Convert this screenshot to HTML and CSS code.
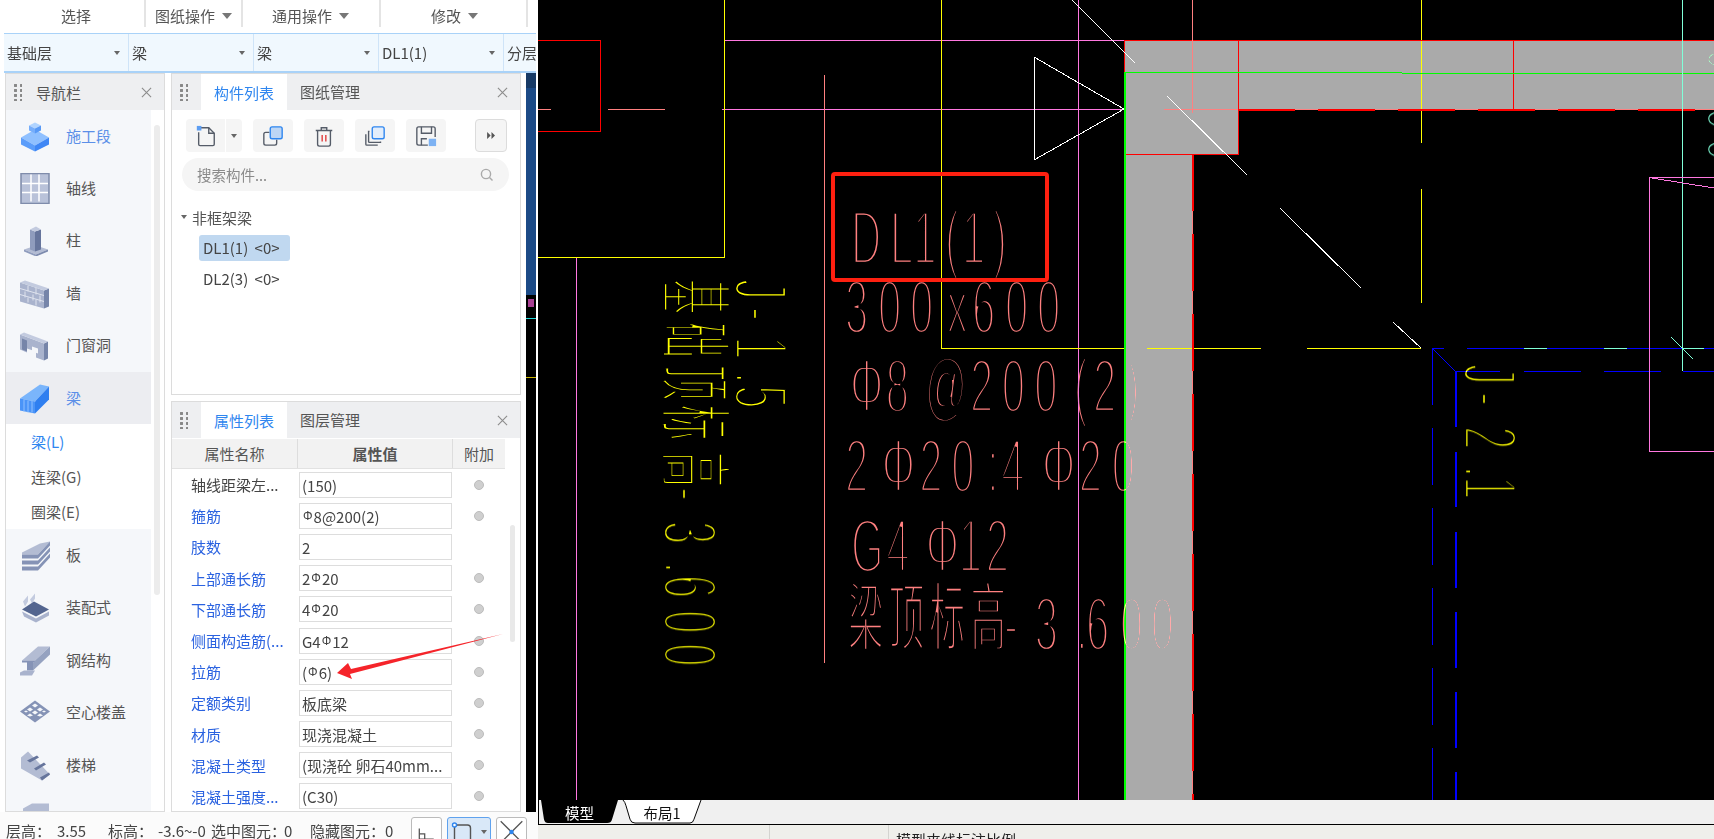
FILE: index.html
```html
<!DOCTYPE html>
<html lang="zh">
<head>
<meta charset="utf-8">
<title>梁 DL1(1)</title>
<link rel="stylesheet" href="styles.css">
</head>
<body>
<div class="app">
  <div class="left">
    <div class="ribbon">
      <div class="rb rb-1"><span class="rb-sel">选择</span></div>
      <div class="rb rb-2">图纸操作<i class="caret"></i></div>
      <div class="rb rb-3">通用操作<i class="caret"></i></div>
      <div class="rb rb-4">修改<i class="caret"></i></div>
    </div>
    <div class="selects">
      <div class="sel">基础层<i class="caret small"></i></div>
      <div class="sel">梁<i class="caret small"></i></div>
      <div class="sel">梁<i class="caret small"></i></div>
      <div class="sel">DL1(1)<i class="caret small"></i></div>
      <div class="sel last">分层</div>
    </div>
    <div class="body">
      <section class="panel nav">
        <header class="phead"><i class="grip"></i><span class="nav-title">导航栏</span>
          <svg class="close" viewBox="0 0 12 12"><path d="M1 1l10 10M11 1L1 11"/></svg></header>
        <div class="nav-wrap">
          <div class="nav-list">
            <div class="item on-text">
              <svg class="ico" viewBox="0 0 30 30"><path fill="#8fc0ff" d="M15 8l14 8-14 8-14-8z"/><path fill="#5b9dfa" d="M1 16l14 8v6L1 23z"/><path fill="#3f87f5" d="M15 24l14-8v7l-14 7z"/><path fill="#b0d4ff" d="M15 1l6 3-6 3-6-3z"/><path fill="#76aefb" d="M9 4l6 3v5l-6-3z"/><path fill="#5799f6" d="M15 7l6-3v5l-6 3z"/></svg>
              <span>施工段</span></div>
            <div class="item">
              <svg class="ico" viewBox="0 0 30 30"><rect x="1" y="0" width="28" height="30" fill="#b9c2d9" stroke="#7f8cab" stroke-width="1.5"/><path stroke="#fff" stroke-width="1.5" d="M11 1v27M19 1v27M2 10h26M2 19h26"/></svg>
              <span>轴线</span></div>
            <div class="item">
              <svg class="ico" viewBox="0 0 30 30"><path fill="#b3bcd3" d="M4 24l12-4 12 4-12 5z"/><path fill="#8f9cbd" d="M4 24l12 5v2L4 26z"/><path fill="#7d8bae" d="M16 29l12-5v2l-12 5z"/><path fill="#8f9cbd" d="M10 4l5 2v20l-5-2z"/><path fill="#66759c" d="M15 6l6-2v20l-6 2z"/><path fill="#c3cbdf" d="M10 4l6-3 5 3-6 2z"/></svg>
              <span>柱</span></div>
            <div class="item">
              <svg class="ico" viewBox="0 0 30 30"><path fill="#a9b3cd" d="M0 4l24 8v18L0 23z"/><path fill="#7685a9" d="M24 12l5-2v18l-5 2z"/><path fill="#c3cbdf" d="M0 4l5-2 24 8-5 2z"/><path stroke="#dfe3ee" fill="none" d="M0 10l24 7M0 16l24 7M8 7v6M16 9v7M5 13v6M13 16v6M20 17v7M8 19v5M16 21v6"/></svg>
              <span>墙</span></div>
            <div class="item">
              <svg class="ico" viewBox="0 0 30 30"><path fill="#a9b3cd" d="M0 4l24 9v17l-8-3v-6l-9-3v4l-7-3z"/><path fill="#7685a9" d="M24 13l4-2v17l-4 2zM2 8l5 2v11l-5-2z"/><path fill="#c3cbdf" d="M0 4l4-2 24 9-4 2z"/><path fill="#f5f7fa" d="M12 16l6 2v5l-6-2z"/></svg>
              <span>门窗洞</span></div>
            <div class="item active">
              <svg class="ico" viewBox="0 0 30 30"><path fill="#7ab5fb" d="M0 15L20 1l9 2-14 15z"/><path fill="#4a94f8" d="M0 15l15 3v12L0 27z"/><path fill="#2f7ff0" d="M15 18L29 3v13L15 30z"/><path stroke="#8fc0ff" d="M4 16v12M8 17v12M12 17v12"/></svg>
              <span>梁</span></div>
            <div class="sub">
              <div class="sub-item cur">梁(L)</div>
              <div class="sub-item">连梁(G)</div>
              <div class="sub-item">圈梁(E)</div>
            </div>
            <div class="item">
              <svg class="ico" viewBox="0 0 30 30"><path fill="#b3bcd3" d="M2 12L20 3l10-2-12 13H2z"/><path fill="#8593b6" d="M2 14h16v4H2zM2 20h16v4H2zM2 26h16v4H2z"/><path fill="#8593b6" d="M18 14L30 1v4L18 18zM18 20L30 7v4L18 24zM18 26l12-13v4L18 30z"/></svg>
              <span>板</span></div>
            <div class="item">
              <svg class="ico" viewBox="0 0 30 30"><path fill="#c3cbdf" d="M3 9l5-6v6l-3 5zM10 7l5-6v5l-3 5z"/><path fill="#53658f" d="M2 17L14 9l15 8-13 7z"/><path fill="#a9b3cd" d="M2 19l14 7 13-7v4l-13 7-12-6z"/></svg>
              <span>装配式</span></div>
            <div class="item">
              <svg class="ico" viewBox="0 0 30 30"><path fill="#b3bcd3" d="M2 15L18 1h12L15 15z"/><path fill="#8593b6" d="M2 15h13v2H2zM7 17h6v8H7z"/><path fill="#95a2c0" d="M15 15L30 1v4L15 19zM13 17l17-12v4L13 25z"/><path fill="#a9b3cd" d="M0 27l4-2h11l-3 5H0z"/></svg>
              <span>钢结构</span></div>
            <div class="item">
              <svg class="ico" viewBox="0 0 30 30"><path fill="#8593b6" d="M15 3l15 11-15 11L0 14z"/><path fill="#f5f7fa" d="M15 6l3 2-3 2-3-2zM10 10l3 2-3 2-3-2zM20 10l3 2-3 2-3-2zM15 13l3 2-3 2-3-2zM6 13l2 1-2 1-2-1zM24 13l2 1-2 1-2-1zM10 16l3 2-3 1-3-1zM20 16l3 2-3 1-3-1z"/></svg>
              <span>空心楼盖</span></div>
            <div class="item">
              <svg class="ico" viewBox="0 0 30 30"><path fill="#b3bcd3" d="M1 7L8 1l22 23-8 6L1 18z"/><path fill="#66759c" d="M7 10l10-5 2 2-9 5zM14 18l10-6 2 2-10 6zM20 27l9-5 1 2-8 6z"/></svg>
              <span>楼梯</span></div>
            <div class="item">
              <svg class="ico" viewBox="0 0 30 30"><path fill="#b3bcd3" d="M3 6l9-5h17v20H3z"/></svg>
              <span>&nbsp;</span></div>
          </div>
          <div class="nav-track"></div>
        </div>
      </section>

      <div class="mid">
        <section class="panel comp">
          <header class="phead"><i class="grip"></i>
            <span class="tab cur">构件列表</span><span class="tab">图纸管理</span>
            <svg class="close" viewBox="0 0 12 12"><path d="M1 1l10 10M11 1L1 11"/></svg></header>
          <div class="tools">
            <div class="tb split">
              <svg class="ti" viewBox="0 0 24 24"><path d="M5 3h10l6 6v12a1.500 1.500 0 0 1-1.500 1.500h-14A1.500 1.500 0 0 1 4 21V8"/><path d="M15 3v6h6"/><rect x="2" y="1" width="5" height="5" fill="#5c9df2" stroke="none"/></svg>
              <span class="tb-arrow"><i class="caret small"></i></span>
            </div>
            <div class="tb">
              <svg class="ti" viewBox="0 0 24 24"><rect x="9" y="2" width="13" height="13" rx="2" fill="#bdd6f5" stroke="#2f86ef"/><path d="M8 8H4a2 2 0 0 0-2 2v10a2 2 0 0 0 2 2h10a2 2 0 0 0 2-2v-4"/></svg></div>
            <div class="tb">
              <svg class="ti" viewBox="0 0 24 24"><path d="M3 6h18M9 6V3h6v3M5 6v15a2 2 0 0 0 2 2h10a2 2 0 0 0 2-2V6"/><path stroke="#e03a3a" d="M10 11v7M14 11v7"/></svg></div>
            <div class="tb">
              <svg class="ti" viewBox="0 0 24 24"><rect x="9" y="2" width="13" height="13" rx="2" fill="#e2edfb" stroke="#2f86ef"/><path d="M6 7H5v11a1 1 0 0 0 1 1h12v-1M2 10v11a1 1 0 0 0 1 1h12"/></svg></div>
            <div class="tb">
              <svg class="ti" viewBox="0 0 24 24"><path d="M14 22H4a2 2 0 0 1-2-2V4a2 2 0 0 1 2-2h16a2 2 0 0 1 2 2v9"/><path d="M7 2v7h11V2M7 22v-7h6"/><rect x="15" y="15" width="8" height="8" fill="#7db2f3" stroke="none"/></svg></div>
            <div class="tb more">
              <svg class="ti-more" viewBox="0 0 10 8"><path fill="#555" d="M0 0l4 4-4 4zM5 0l4 4-4 4z"/></svg></div>
          </div>
          <div class="search"><span>搜索构件...</span>
            <svg class="sicon" viewBox="0 0 14 14"><circle cx="6" cy="6" r="4.600"/><path d="M9.500 9.500L12.500 12.500"/></svg></div>
          <div class="tree">
            <div class="tree-head"><i class="caret small"></i>非框架梁</div>
            <div class="leaf cur">DL1(1) &lt;0&gt;</div>
            <div class="leaf">DL2(3) &lt;0&gt;</div>
          </div>
        </section>

        <section class="panel props">
          <header class="phead"><i class="grip"></i>
            <span class="tab cur">属性列表</span><span class="tab">图层管理</span>
            <svg class="close" viewBox="0 0 12 12"><path d="M1 1l10 10M11 1L1 11"/></svg></header>
          <div class="thead"><div class="th th-n">属性名称</div><div class="th th-v">属性值</div><div class="th th-a">附加</div></div>
          <div class="rows">
            <div class="row"><span class="pn">轴线距梁左...</span><span class="pv">(150)</span><i class="dot"></i></div>
            <div class="row"><span class="pn link">箍筋</span><span class="pv"><b class="bar">Φ</b>8@200(2)</span><i class="dot"></i></div>
            <div class="row"><span class="pn link">肢数</span><span class="pv">2</span></div>
            <div class="row"><span class="pn link">上部通长筋</span><span class="pv">2<b class="bar">Φ</b>20</span><i class="dot"></i></div>
            <div class="row"><span class="pn link">下部通长筋</span><span class="pv">4<b class="bar">Φ</b>20</span><i class="dot"></i></div>
            <div class="row"><span class="pn link">侧面构造筋(...</span><span class="pv">G4<b class="bar">Φ</b>12</span><i class="dot"></i></div>
            <div class="row"><span class="pn link">拉筋</span><span class="pv">(<b class="bar">Φ</b>6)</span><i class="dot"></i></div>
            <div class="row"><span class="pn link">定额类别</span><span class="pv">板底梁</span><i class="dot"></i></div>
            <div class="row"><span class="pn link">材质</span><span class="pv">现浇混凝土</span><i class="dot"></i></div>
            <div class="row"><span class="pn link">混凝土类型</span><span class="pv">(现浇砼 卵石40mm...</span><i class="dot"></i></div>
            <div class="row"><span class="pn link">混凝土强度...</span><span class="pv">(C30)</span><i class="dot"></i></div>
            <div class="props-track"></div>
          </div>
        </section>
      </div>
      <div class="strip"><div class="strip-blue"></div><div class="strip-mark m1"></div><div class="strip-mark m2"></div><div class="strip-mark m3"></div></div>
    </div>
    <div class="status">
      <span class="st w51">层高：</span><span class="st w51">3.55</span><span class="st w50">标高：</span><span class="st w53">-3.6~-0</span><span class="st w73">选中图元：</span><span class="st w26">0</span><span class="st w75">隐藏图元：</span><span class="st w26">0</span>
      <div class="sb sb-first">
        <svg viewBox="0 0 30 24"><path d="M7 8v12h16M7 14h6v6" /></svg>
      </div>
      <div class="sb sb-on">
        <svg viewBox="0 0 26 24"><rect x="5" y="5" width="16" height="18" rx="3"/><circle cx="5" cy="5" r="2" fill="#fff" stroke="#2f86ef"/></svg><i class="caret small"></i>
      </div>
      <div class="sb">
        <svg viewBox="0 0 30 24"><path d="M3 0l24 24M27 0L3 24"/><circle cx="15" cy="12" r="2.500" fill="#2f86ef" stroke="none"/></svg>
      </div>
    </div>
    <svg class="annot" viewBox="0 0 538 839"><path fill="#f5242a" d="M503 634L351 669l-3-6-11 10 15 6-2-5z"/></svg>
  </div>

  <div class="cad">
    <svg class="draw" viewBox="538 0 1176 800">
      <rect class="bg" x="538" y="0" width="1176" height="800"/>
      <path class="gray" d="M1124 40H1714V109H1238.500V154H1192V800H1124z"/>
      <g class="lines">
        <path class="red" d="M538 40.500H600.500V131.500H538"/>
        <path class="sal" d="M538 109.500H551M608 109.500H665"/>
        <path class="pink" d="M722 109.500H1124M724 40.500H1124M576.500 257V800M1078.500 0V800"/>
        <path class="sal" d="M824.500 75V663"/>
        <path class="yel" d="M724.500 0V257.500H538M941.500 0V348.500H1124M1421.500 0V143M1421.500 189V303"/>
        <path class="yel" d="M1147 348.500H1261M1307 348.500H1421"/>
        <path class="red" d="M1124 72V40.500H1714M1238.500 40V154.500H1124M1513.500 40V109"/>
        <path class="sal" d="M1192.500 0V113M1164 109.500H1238M1192.500 154V800M1238 109.500H1714"/>
        <path class="red2 dash-h" d="M1192.500 154V800"/>
        <path class="red2 dash-h" d="M1238 109.500H1714"/>
        <path class="grn2" d="M1124.500 72V800"/>
        <path class="grn" d="M1124 72.500H1402M1402 73.500H1714"/>
        <path class="wht" d="M1072 0L1135 63M1167 96L1247 175M1280 208L1361 288M1393 322L1421 348M1034 57V160L1124 109zM1034 57.500"/>
        <path class="blu" d="M1444 348.500H1432.500L1455 371M1455 371.500H1500M1524 371.500H1581M1604 371.500H1661M1683 371.500H1714M1432.500 348V405"/>
        <path class="blu dash-h" d="M1432.500 428V800"/>
        <path class="blu" d="M1467 348.500H1683M1690 348.500H1714"/>
        <path class="blu2" d="M1455.500 371V427M1455.500 452V507M1455.500 532V588M1455.500 612V668M1455.500 692V748M1455.500 772V800"/>
        <path class="cyn" d="M1524 348.500H1547M1604 348.500H1627M1683 348.500H1704M1682.500 0V371M1671 337L1693 359"/>
        <path class="pink" d="M1649.500 451.500V177.500H1714M1649.500 451.500H1714M1652 178L1714 188"/>
      </g>
      <g class="cadtext salt">
        <text class="latin" transform="translate(851,264) scale(.55,1)" x="0 71 113 171 202 258">DL1(1)</text>
        <text class="latin" transform="translate(845,333) scale(.55,1)" x="0 60 118 185 231 291 349">300x600</text>
        <text class="latin" transform="translate(850,412) scale(.55,1)" x="0 65 136 218 276 335 407 442 502">Φ8@200(2)</text>
        <text class="latin" transform="translate(845,492) scale(.55,1)" x="0 67 135 193 258 284 358 425 485">2Φ20;4Φ20</text>
        <text class="latin" transform="translate(851,572) scale(.55,1)" x="0 64 136 196 245">G4Φ12</text>
        <text class="han" transform="translate(848,644) scale(.48,1)" x="0 85 170 255">梁顶标高</text>
        <text class="latin" transform="translate(1004,650) scale(.55,1)" x="0 56 131 149 211 267">-3.600</text>
      </g>
      <g class="cadtext yelt">
        <text class="latin" transform="translate(735,279) rotate(90) scale(.55,1)" x="0 51 104 169 193">J-1.5</text>
        <text class="han" transform="translate(668,279) rotate(90) scale(.48,1)" x="0 90 179 262 360">基础顶标高</text>
        <text class="latin" transform="translate(664,487) rotate(90) scale(.55,1)" x="0 62 136 160 224 284">-3.600</text>
        <text class="latin" transform="translate(1464,364) rotate(90) scale(.55,1)" x="0 51 113 185 204">J-2.1</text>
      </g>
      <g class="cadtext cynt">
        <text class="latin" transform="translate(1707,50) rotate(90) scale(.55,1)" x="0 66 104 160">J-00</text>
      </g>
      <rect class="mark" x="833" y="174" width="214" height="106" rx="2"/>
    </svg>
    <div class="tabbar">
      <div class="ctab ctab-m"><svg class="ctab-bg" viewBox="0 0 78 25" preserveAspectRatio="none"><path fill="#000" d="M0 0h78l-6 20q-1 4-5 4H7q-3 0-4-4z"/></svg><span>模型</span></div>
      <div class="ctab ctab-l"><svg class="ctab-bg" viewBox="0 0 80 25" preserveAspectRatio="none"><path fill="#fff" stroke="#000" d="M1 0q2 2 3 6l4 14q1 4 5 4h55q3 0 4-4l7-20"/></svg><span>布局1</span></div>
    </div>
    <div class="cad-status">
      <div class="cs cs-1"></div><div class="cs cs-2"></div><div class="cs cs-3">模型夹线标注比例</div>
    </div>
  </div>
</div>
</body>
</html>
```

FILE: styles.css
```css
* { box-sizing: border-box; }
html, body { margin: 0; padding: 0; height: 839px; overflow: hidden; background: #fff; }
body { font-family: "Noto Sans CJK SC", "Noto Sans", sans-serif; font-size: 15px; color: #444; }
i { display: block; font-style: normal; }
.app { display: flex; width: 1714px; height: 839px; }

/* left column */
.left { position: relative; width: 538px; height: 839px; flex: none; background: #fff; }
.ribbon, .selects, .body, .status { filter: blur(.3px); }
.ribbon { display: flex; height: 33px; }
.rb { display: flex; align-items: center; height: 27px; padding-top: 4px; border-right: 2px solid #e4e4e4; color: #555; white-space: nowrap; }
.rb-1 { width: 146px; justify-content: center; padding-left: 8px; }
.rb-sel { position: relative; top: 0; }
.rb-2 { width: 97px; padding-left: 9px; }
.rb-3 { width: 138px; padding-left: 29px; }
.rb-4 { width: 147px; padding-left: 50px; }
.caret { width: 0; height: 0; margin-left: 7px; border-left: 5px solid transparent; border-right: 5px solid transparent; border-top: 6px solid #777; }
.caret.small { margin-left: 0; border-left-width: 3.500px; border-right-width: 3.500px; border-top-width: 4px; border-top-color: #666; }

.selects { display: flex; height: 40px; margin-left: 4px; width: 532px; background: #f0f8fe; border-top: 1px solid #a9d2f8; border-bottom: 2px solid #a9d2f8; overflow: hidden; }
.sel { display: flex; align-items: center; justify-content: space-between; width: 125px; flex: none; padding: 0 8px 0 3px; border-right: 1px solid #cfe4f8; color: #444; white-space: nowrap; }
.sel.last { border: 0; width: 33px; padding-right: 0; }

.body { display: flex; height: 739px; padding-left: 5px; }
.panel { border: 1px solid #dcdcdc; background: #fff; overflow: hidden; }
.phead { display: flex; align-items: center; height: 36px; background: #eeeff1; position: relative; }
.grip { width: 8px; height: 17px; margin-left: 8px; flex: none; background: radial-gradient(circle at 1.500px 1.500px, #888 1.400px, transparent 1.600px) 0 0 / 6px 5px; }
.close { position: absolute; right: 12px; top: 13px; width: 11px; height: 11px; fill: none; stroke: #8c8c8c; stroke-width: 1.200; }
.nav-title { margin-left: 14px; color: #555; }

/* navigation */
.nav { width: 160px; flex: none; }
.nav-wrap { position: relative; height: 702px; overflow: hidden; }
.nav-list { width: 145px; height: 702px; background: #f5f7fa; overflow: hidden; }
.item { display: flex; align-items: center; height: 52.400px; padding-left: 14px; color: #555; }
.item span { position: relative; top: -1px; margin-left: 16px; }
.ico { width: 30px; height: 31px; flex: none; }
.on-text, .active { color: #5b8fe8; }
.active { background: #ecedf1; }
.sub { background: #fff; height: 105px; }
.sub-item { height: 35px; line-height: 35px; padding-left: 25px; color: #555; }
.sub-item.cur { color: #2f86ef; }
.nav-track { position: absolute; right: 4px; top: 15px; width: 6px; height: 470px; background: #ececec; border-radius: 3px; }

/* middle */
.mid { display: flex; flex-direction: column; gap: 6px; width: 350px; margin-left: 6px; flex: none; }
.comp { height: 322px; }
.props { height: 411px; }
.tab { display: flex; align-items: center; height: 36px; padding: 0 13px; white-space: nowrap; color: #555; position: relative; top: -1px; }
.tab.cur { margin-left: 13px; background: #fff; color: #2f86ef; top: 0; }
.tools { display: flex; align-items: flex-start; height: 48px; padding: 9px 0 0 14px; gap: 11px; }
.tb { display: flex; align-items: center; justify-content: center; width: 40px; height: 33px; background: #f5f5f5; border-radius: 4px; }
.tb.split { width: 56px; justify-content: flex-start; padding-left: 9px; }
.tb-arrow { display: flex; align-items: center; justify-content: center; margin-left: 8px; width: 16px; height: 33px; border-left: 1px solid #fff; }
.ti { width: 22px; height: 22px; fill: none; stroke: #555c68; stroke-width: 1.500; flex: none; }
.more { width: 32px; margin-left: 18px; border: 1px solid #dcdcdc; }
.ti-more { width: 9px; height: 7px; }
.search { display: flex; align-items: center; justify-content: space-between; width: 327px; height: 33px; margin: 0 0 0 10px; padding: 0 15px; background: #f5f5f5; border-radius: 17px; color: #8a8a8a; font-size: 14.500px; }
.sicon { width: 14px; height: 14px; fill: none; stroke: #aaa; stroke-width: 1.400; }
.tree { padding-top: 14px; }
.tree-head { display: flex; align-items: center; gap: 5px; height: 24px; padding-left: 9px; color: #555; }
.leaf { width: 91px; height: 26px; margin: 6px 0 0 27px; padding-left: 4px; line-height: 26px; border-radius: 3px; font-size: 15px; word-spacing: 3px; white-space: nowrap; }
.leaf.cur { background: #c0d8f0; }
.leaf + .leaf { margin-top: 5px; }

/* property table */
.thead { display: flex; width: 333px; height: 30px; margin-top: 1px; background: #f2f2f2; border-bottom: 1px solid #e2e2e2; }
.th { text-align: center; line-height: 29px; color: #555; border-right: 1px solid #ddd; }
.th-n { width: 126px; }
.th-v { width: 155px; font-weight: 700; }
.th-a { width: 52px; border-right: 0; }
.rows { position: relative; }
.row { display: flex; align-items: center; height: 31.200px; }
.pn { width: 127px; flex: none; padding-left: 19px; white-space: nowrap; color: #444; }
.pn.link { color: #2a62e0; }
.pv { display: block; width: 153px; height: 26px; flex: none; padding-left: 2px; line-height: 25px; border: 1px solid #ddd; color: #444; white-space: nowrap; overflow: hidden; }
.bar { font: 400 12px "Liberation Sans", sans-serif; position: relative; top: -3px; margin: 0 1px; }
.dot { width: 10px; height: 10px; margin-left: 22px; border-radius: 50%; background: #cfcfcf; border: 1px solid #bcbcbc; }
.props-track { position: absolute; left: 338px; top: 56px; width: 5px; height: 117px; background: #e9e9e9; border-radius: 3px; }

/* dark strip left of the drawing */
.strip { position: relative; width: 10px; height: 739px; margin-left: 5px; flex: none; background: #000; }
.strip-blue { height: 222px; background: linear-gradient(#173a66 0 15px, #1b4a86 15px); }
.strip-mark { position: absolute; left: 0; width: 10px; }
.m1 { top: 226px; left: 2px; width: 6px; height: 8px; background: #a83f92; }
.m2 { top: 245px; height: 1px; background: #1fd6d6; }
.m3 { top: 304px; height: 1px; background: #c8b400; }

/* status */
.status { display: flex; align-items: flex-start; height: 27px; padding-left: 6px; overflow: hidden; background: #fbfbfb; white-space: nowrap; }
.st { display: block; height: 27px; padding-top: 10px; line-height: 17px; flex: none; }
.w51 { width: 51px; } .w50 { width: 50px; } .w53 { width: 53px; } .w73 { width: 73px; } .w75 { width: 75px; } .w26 { width: 26px; }
.sb { display: flex; align-items: center; width: 31px; height: 30px; margin: 5px 0 0 5px; padding-left: 1px; border: 1px solid #bbb; border-radius: 3px; background: #fff; flex: none; }
.sb-first { margin-left: 0; }
.sb svg { width: 27px; height: 24px; fill: none; stroke: #555; stroke-width: 1.400; flex: none; }
.sb-on { width: 44px; background: #d9e8f8; border-color: #5fa2ee; gap: 5px; }
.annot { position: absolute; left: 0; top: 0; width: 538px; height: 839px; pointer-events: none; }

/* cad canvas */
.cad { display: flex; flex-direction: column; width: 1176px; height: 839px; flex: none; }
.draw { display: block; width: 1176px; height: 800px; flex: none; }
.bg { fill: #000; }
.gray { fill: #aaa; }
.lines path { fill: none; stroke-width: 1; shape-rendering: crispEdges; }
.lines .red2 { stroke: #f00; stroke-width: 2; }
.lines .grn2 { stroke: #0f0; stroke-width: 2; }
.lines .blu2 { stroke: #00f; stroke-width: 2; }
.red { stroke: #f00; }
.sal { stroke: #ff8080; }
.pink { stroke: #ff78e0; }
.yel { stroke: #ff0; }
.grn { stroke: #0f0; }
.wht { stroke: #fff; }
.blu { stroke: #00f; }
.cyn { stroke: #80ffd8; }
.dash-h { stroke-dasharray: 57 23; }
.cadtext { mix-blend-mode: lighten; stroke: #000; }
.cadtext .latin { font: 400 76px "Liberation Sans", sans-serif; stroke-width: 4.400; }
.cadtext .han { font: 400 74px "Noto Sans CJK SC", sans-serif; stroke-width: 3.600; }
.salt { fill: #ff8080; }
.yelt { fill: #ff0; }
.cynt { fill: #80ffd8; }
.mark { fill: none; stroke: #ff2010; stroke-width: 4; }

.tabbar { display: flex; height: 25px; padding-left: 2px; gap: 4px; background: #f0f0f0; border-left: 1px solid #000; border-bottom: 1px solid #000; flex: none; }
.ctab { position: relative; display: flex; align-items: center; justify-content: center; height: 24px; font-size: 14.500px; }
.ctab span { position: relative; }
.ctab-bg { position: absolute; inset: 0; width: 100%; height: 100%; }
.ctab-m { width: 77px; color: #fff; }
.ctab-l { width: 80px; color: #111; }
.cad-status { display: flex; height: 14px; background: #efefeb; overflow: hidden; flex: none; }
.cs { height: 14px; border-right: 1px solid #d4d4d0; flex: none; }
.cs-1 { width: 232px; }
.cs-2 { width: 119px; }
.cs-3 { padding: 5px 0 0 7px; border: 0; line-height: 20px; color: #222; white-space: nowrap; }
```
